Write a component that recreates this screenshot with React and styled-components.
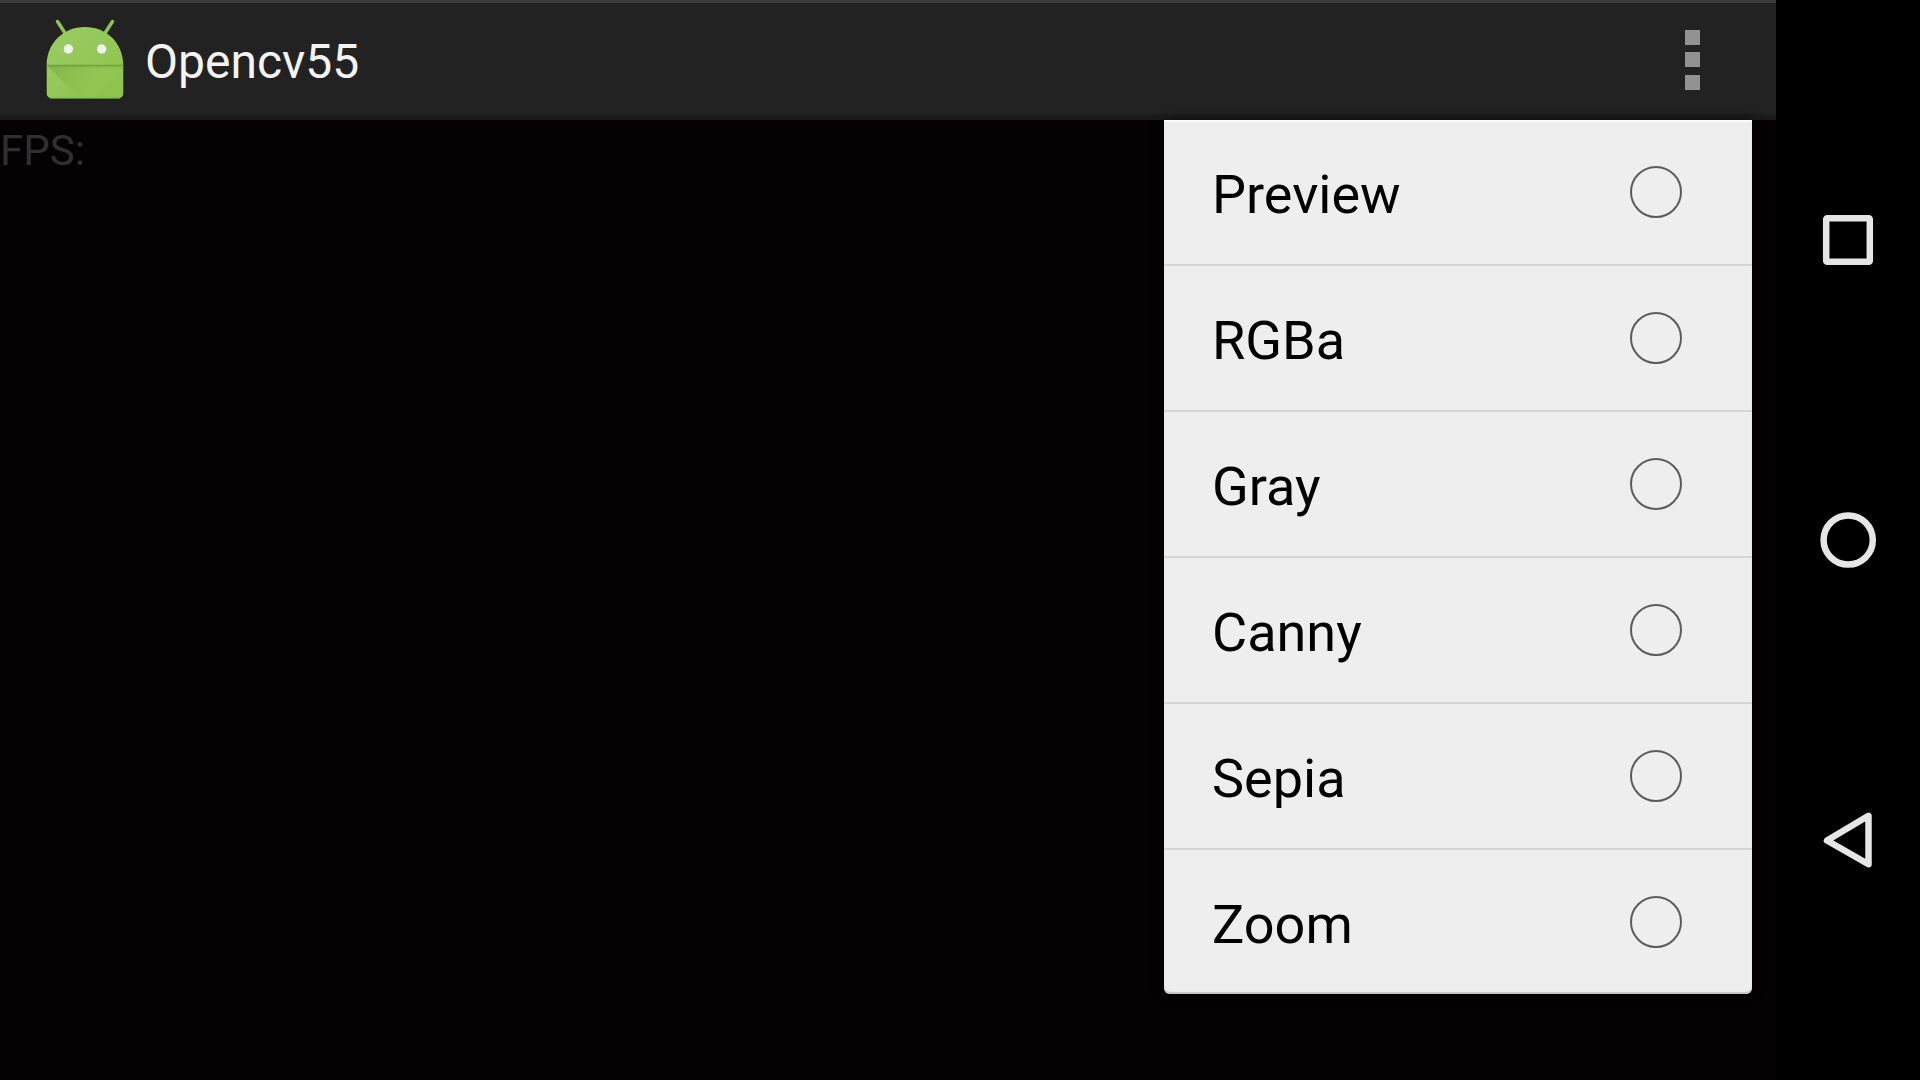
import React from "react";
import styled, { createGlobalStyle } from "styled-components";

const GlobalStyle = createGlobalStyle`
  *, *::before, *::after { box-sizing: border-box; }
  body {
    margin: 0;
    background: #000;
    font-family: Roboto, "Noto Sans", sans-serif;
  }
`;

const Device = styled.div`
  display: flex;
  min-height: 100vh;
  background: #000;
`;

const Screen = styled.div`
  position: relative;
  flex: 1;
  display: flex;
  flex-direction: column;
  background: #040202;
`;

const ActionBar = styled.header`
  display: flex;
  align-items: center;
  height: 120px;
  padding: 0 68px 0 45px;
  background: #222;
  border-top: 3px solid #3a3a3a;
  border-bottom: 6px solid #1b1b1b;
`;

const AppIcon = styled.svg`
  display: block;
  width: 80px;
  height: 84px;
`;

const Title = styled.h1`
  flex: 1;
  margin: 0;
  padding: 6px 0 0 20px;
  color: #f3f3f3;
  font-size: 48px;
  font-weight: 400;
  line-height: 56px;
`;

const IconButton = styled.button`
  display: flex;
  align-items: center;
  justify-content: center;
  padding: 0;
  border: 0;
  background: transparent;
  cursor: pointer;
`;

const OverflowButton = styled(IconButton)`
  width: 31px;
  height: 96px;
`;

const Preview = styled.main`
  flex: 1;
  padding: 6px 0 0;
`;

const Fps = styled.p`
  margin: 0;
  color: #303030;
  font-size: 42px;
  line-height: 50px;
`;

const Menu = styled.fieldset`
  position: absolute;
  top: 120px;
  right: 24px;
  width: 588px;
  min-width: 0;
  margin: 0;
  padding: 0;
  border: 0;
  border-radius: 0 0 6px 6px;
  background: #eee;
  box-shadow: inset 0 2px 1px #fafafa, inset 0 -2px 1px #c4c4c4, 0 0 12px rgba(0, 0, 0, 0.5);
`;

const MenuRow = styled.label`
  display: flex;
  align-items: center;
  justify-content: space-between;
  height: 146px;
  padding: 0 70px 0 48px;
  border-bottom: 2px solid #d5d5d5;
  cursor: pointer;

  &:last-child {
    height: 144px;
    border-bottom: 0;
  }
`;

const RowText = styled.span`
  padding-top: 6px;
  color: #000;
  font-size: 54px;
  line-height: 64px;
`;

const Radio = styled.input`
  appearance: none;
  width: 52px;
  height: 52px;
  margin: 0;
  border: 2px solid #5c5c5c;
  border-radius: 50%;

  &:checked {
    box-shadow: inset 0 0 0 11px #eee;
    background: #5c5c5c;
  }
`;

const NavBar = styled.nav`
  display: flex;
  flex-direction: column;
  justify-content: center;
  width: 144px;
  background: #000;
`;

const NavButton = styled(IconButton)`
  height: 300px;
`;

const NavIcon = styled.svg`
  display: block;
  width: 60px;
  height: 60px;
  fill: none;
  stroke: #e6e6e6;
  stroke-width: 6.5;
  stroke-linejoin: round;
`;

const modes = ["Preview", "RGBa", "Gray", "Canny", "Sepia", "Zoom"];

function AndroidIcon() {
  return (
    <AppIcon viewBox="45 17 80 84" aria-hidden="true">
      <defs>
        <linearGradient id="body" x1="0" y1="0" x2="1" y2="1">
          <stop offset="0" stopColor="#9ccc65" />
          <stop offset="1" stopColor="#8bc34a" />
        </linearGradient>
        <linearGradient id="fold" gradientUnits="userSpaceOnUse" x1="47" y1="65" x2="88" y2="92">
          <stop offset="0" stopColor="#6fa53c" stopOpacity="0.6" />
          <stop offset="1" stopColor="#7cb342" stopOpacity="0" />
        </linearGradient>
        <linearGradient id="crease" x1="0" y1="0" x2="0" y2="1">
          <stop offset="0" stopColor="#5f9436" stopOpacity="0.4" />
          <stop offset="1" stopColor="#7cb342" stopOpacity="0" />
        </linearGradient>
      </defs>
      <path
        d="M46.5 65.500V93.500a5 5 0 0 0 5 5H118.500a5 5 0 0 0 5-5V65.500z"
        fill="#141a0e"
        opacity="0.5"
        transform="translate(0 1)"
      />
      <path d="M57.500 21.500L65 33M112.500 21.500L105 33" stroke="#8fc650" strokeWidth="3.400" strokeLinecap="round" />
      <path d="M46.700 65.500C46.700 43 63.500 27 85 27S123.300 43 123.300 65.500V93.500a5 5 0 0 1-5 5H51.700a5 5 0 0 1-5-5z" fill="url(#body)" />
      <path d="M47 65.500H123.300V98H80z" fill="url(#fold)" />
      <path d="M46.700 65.500H123.300V69.500H46.700z" fill="url(#crease)" />
      <path d="M46.700 65.300H123.300" stroke="#679a3c" strokeWidth="1" />
      <path d="M50 98.300H120" stroke="#5f8f38" strokeWidth="1" />
      <circle cx="68.400" cy="49" r="4.700" fill="#f1f1f1" />
      <circle cx="101.600" cy="49" r="4.700" fill="#f1f1f1" />
    </AppIcon>
  );
}

export default function App() {
  return (
    <>
      <GlobalStyle />
      <Device>
        <Screen>
          <ActionBar>
            <AndroidIcon />
            <Title>Opencv55</Title>
            <OverflowButton type="button" aria-label="More options">
              <svg width="15" height="62" viewBox="0 0 15 62" fill="#929292" shapeRendering="crispEdges">
                <rect y="2" width="15" height="15" />
                <rect y="24" width="15" height="15" />
                <rect y="47" width="15" height="15" />
              </svg>
            </OverflowButton>
          </ActionBar>
          <Preview>
            <Fps>FPS:</Fps>
          </Preview>
          <Menu aria-label="Camera mode">
            {modes.map((mode) => (
              <MenuRow key={mode} htmlFor={`mode-${mode}`}>
                <RowText>{mode}</RowText>
                <Radio type="radio" name="mode" id={`mode-${mode}`} value={mode} />
              </MenuRow>
            ))}
          </Menu>
        </Screen>
        <NavBar aria-label="System navigation">
          <NavButton type="button" aria-label="Recent apps">
            <NavIcon viewBox="0 0 60 60">
              <rect x="8.200" y="8.200" width="43.600" height="43.600" rx="1" />
            </NavIcon>
          </NavButton>
          <NavButton type="button" aria-label="Home">
            <NavIcon viewBox="0 0 60 60">
              <circle cx="30.200" cy="30" r="24.600" />
            </NavIcon>
          </NavButton>
          <NavButton type="button" aria-label="Back">
            <NavIcon viewBox="0 0 60 60">
              <path d="M9 30.500L50.500 5.800V54.200z" />
            </NavIcon>
          </NavButton>
        </NavBar>
      </Device>
    </>
  );
}
